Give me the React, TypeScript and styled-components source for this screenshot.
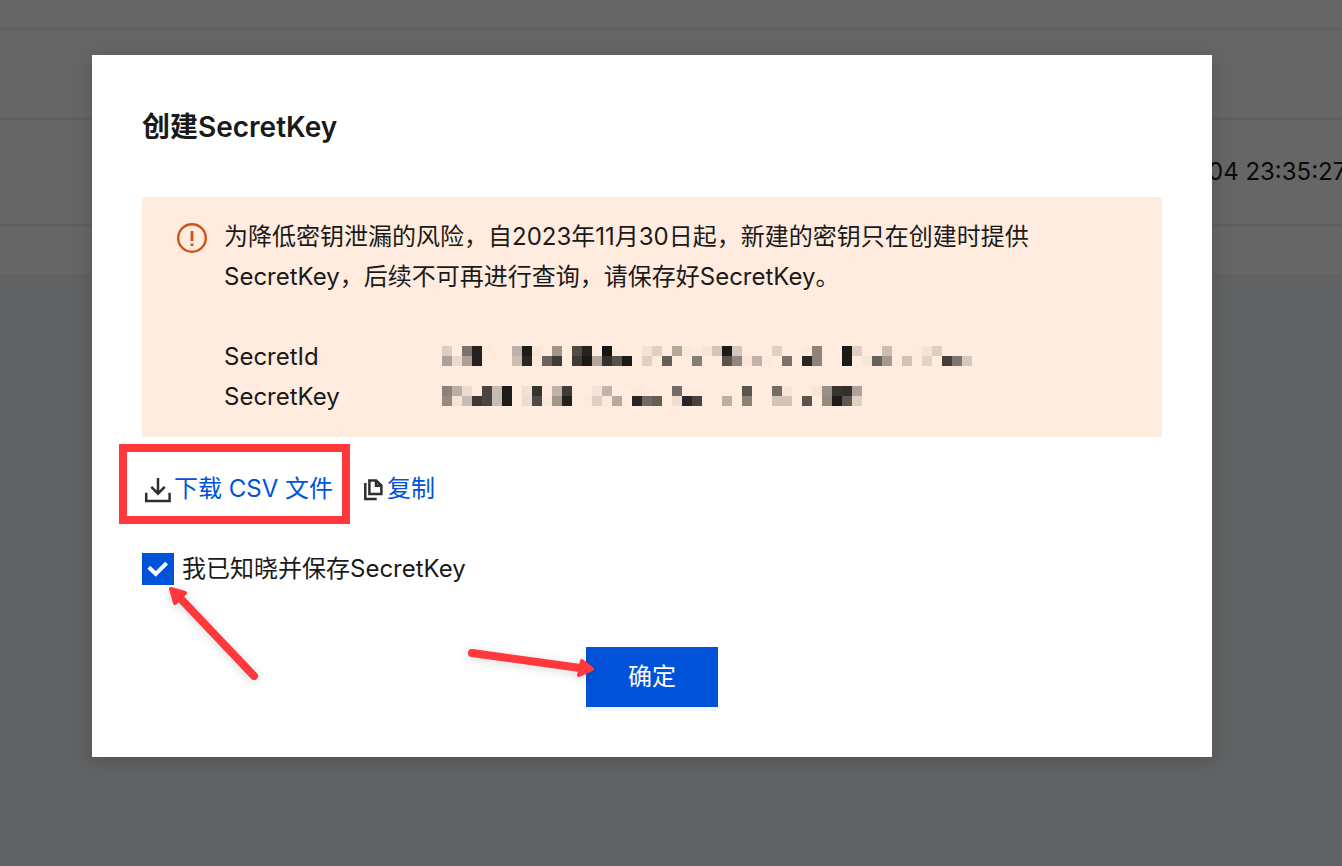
import React from 'react';
import styled, { createGlobalStyle } from 'styled-components';

const GlobalStyle = createGlobalStyle`
  * {
    box-sizing: border-box;
  }
  body {
    margin: 0;
    background: #f3f5f8;
    color: #1a1a1a;
    font-family: Inter, 'Noto Sans CJK SC', sans-serif;
    font-size: 24px;
    line-height: 40px;
  }
`;

const Page = styled.main`
  position: relative;
  min-height: 100vh;
  overflow: hidden;
`;

const KeyTable = styled.table`
  position: absolute;
  inset: 0 0 auto 0;
  width: 100%;
  table-layout: fixed;
  border-collapse: separate;
  border-spacing: 0;
  background: #ffffff;
`;

const KeyCell = styled.td<{ $height: number; $last?: boolean }>`
  height: ${(p) => p.$height}px;
  padding: 0;
  border-bottom: ${(p) => (p.$last ? '0' : '2px solid #ebebf7')};
  white-space: nowrap;
`;

const TimeColumn = styled.col`
  width: 134px;
`;

const Backdrop = styled.div`
  position: relative;
  min-height: 100vh;
  padding: 55px 130px 109px 92px;
  background: rgba(0, 0, 0, 0.6);
`;

const Dialog = styled.section`
  position: relative;
  padding: 50px;
  background: #ffffff;
  box-shadow: 0 4px 20px rgba(0, 0, 0, 0.16);
`;

const Title = styled.h1`
  margin: 0 0 48px;
  font-size: 28px;
  font-weight: 600;
  line-height: 44px;
`;

const Notice = styled.div`
  display: flex;
  gap: 17px;
  padding: 20px 35px;
  background: #ffecdf;
`;

const NoticeIcon = styled.svg`
  flex: none;
  width: 30px;
  height: 30px;
  margin-top: 6px;
`;

const NoticeBody = styled.div`
  flex: 1;
  min-width: 0;
`;

const NoticeText = styled.p`
  max-width: 820px;
  margin: 0 0 40px;
`;

const Credentials = styled.dl`
  display: grid;
  grid-template-columns: 218px 1fr;
  margin: 0;
`;

const CredentialValue = styled.dd`
  display: flex;
  align-items: center;
  margin: 0;
  padding-bottom: 2px;
`;

const Actions = styled.div`
  display: flex;
  gap: 30px;
  margin-top: 32px;
`;

const ActionLink = styled.a`
  position: relative;
  display: flex;
  align-items: center;
  color: #0052d9;
  text-decoration: none;
  white-space: nowrap;
`;

const ActionIcon = styled.svg<{ $size: number }>`
  flex: none;
  width: ${(p) => p.$size}px;
  height: ${(p) => p.$size}px;
  fill: none;
  stroke: #2e2e30;
`;

const HighlightFrame = styled.span`
  position: absolute;
  inset: -25px -17px -15px -23px;
  border: 8px solid #ff383c;
  pointer-events: none;
`;

const Confirm = styled.label`
  display: flex;
  align-items: center;
  gap: 8px;
  width: fit-content;
  margin-top: 40px;
`;

const CheckWrap = styled.span`
  position: relative;
  display: flex;
`;

const Checkbox = styled.input`
  appearance: none;
  width: 32px;
  height: 32px;
  margin: 0;
  border: 2px solid #0052d9;
  background: #ffffff;

  &:checked {
    background: #0052d9;
  }
`;

const CheckMark = styled.svg`
  position: absolute;
  inset: 0;
  pointer-events: none;
`;

const Footer = styled.footer`
  display: flex;
  justify-content: center;
  margin-top: 58px;
`;

const PrimaryButton = styled.button`
  width: 132px;
  height: 60px;
  padding: 0;
  border: 0;
  background: #0052d9;
  box-shadow: 0 4px 0 #f1f5fe;
  color: #ffffff;
  font: inherit;
`;

const ArrowLayer = styled.svg<{ $left: string; $bottom: number }>`
  position: absolute;
  left: ${(p) => p.$left};
  bottom: ${(p) => p.$bottom}px;
  overflow: visible;
  pointer-events: none;
  filter: drop-shadow(0 2px 5px rgba(0, 0, 0, 0.15));
`;

type Cells = Record<number, string>;

const secretIdCells: [Cells, Cells] = [
  {
    0: '#ddcec2', 2: '#7c736e', 3: '#262120', 4: '#feeadd', 7: '#bfb1a9', 8: '#1d1c1a', 9: '#f7e5d8',
    11: '#9f958d', 13: '#514d45', 14: '#262320', 16: '#161614', 20: '#f4e3d5', 21: '#dfd0c3',
    23: '#b3a89f', 24: '#fbe8da', 25: '#feeadd', 26: '#f7e5d7', 27: '#d3c5b8', 28: '#1b1b1a',
    29: '#d5c7bb', 33: '#dfd0c3', 36: '#fbe9dc', 37: '#8d837a', 40: '#1a1a16', 41: '#dfcfc3',
    44: '#cabdb2', 47: '#feebdd', 48: '#f5e4d6', 49: '#dfcfc3',
  },
  {
    0: '#aca198', 1: '#ecdacf', 2: '#ac9f97', 3: '#262120', 7: '#cabdb3', 8: '#2a2622', 9: '#fae8da',
    10: '#69635c', 11: '#3f3b37', 13: '#413b37', 14: '#1b1a16', 15: '#b2a69e', 16: '#34302c',
    17: '#57534c', 18: '#1a1a16', 20: '#dfd0c3', 21: '#fdeadc', 22: '#665f59', 25: '#867d75',
    28: '#59554d', 29: '#91877e', 30: '#f7e5d7', 31: '#c1b3aa', 32: '#feeadd', 34: '#7b726b',
    36: '#2a2622', 37: '#8d837a', 40: '#1a1a16', 42: '#f6e5d8', 43: '#65625a', 44: '#a5998f',
    46: '#d0c2b5', 48: '#e3d3c7', 50: '#433e3a', 51: '#7e756e', 52: '#d5c8bd',
  },
];

const secretKeyCells: [Cells, Cells] = [
  {
    0: '#8d827b', 1: '#baaea6', 2: '#ecdacf', 4: '#4a4541', 5: '#cabbb1', 6: '#1d1c18', 8: '#f3e1d5',
    9: '#37332f', 10: '#feebdd', 11: '#bfb3a7', 12: '#403b38', 15: '#f4e2d5', 16: '#c2b4ac',
    19: '#fbe9db', 23: '#736b65', 30: '#59554d', 33: '#736c65', 34: '#f7e5d8', 37: '#f7e5d7',
    38: '#9b9087', 39: '#37332f', 40: '#332f2c', 41: '#aea29a',
  },
  {
    0: '#968b83', 1: '#f5e3d6', 2: '#cabbb1', 3: '#3f3a38', 4: '#4a4541', 5: '#cabbb1', 6: '#1d1c18',
    8: '#ecdbd0', 9: '#504b48', 10: '#fae8da', 11: '#a1968e', 12: '#22211e', 14: '#fdeadf',
    15: '#dfcfc3', 16: '#fce9dc', 17: '#b5a9a0', 19: '#2a2522', 20: '#716a64', 21: '#645d58',
    23: '#efddd0', 24: '#2a2522', 25: '#48433f', 28: '#bbafa6', 30: '#8a8178', 33: '#d2c5b8',
    34: '#d2c5b8', 36: '#59554d', 38: '#968b83', 39: '#1f1b1a', 40: '#5d5952', 41: '#dfcfc3',
  },
];

// A redacted value, drawn as two rows of 10px blocks.
function Mosaic({ rows, columns }: { rows: [Cells, Cells]; columns: number }) {
  return (
    <svg width={columns * 10} height="20" shapeRendering="crispEdges" aria-hidden="true">
      {rows.map((row, y) =>
        Object.entries(row).map(([x, color]) => (
          <rect key={`${x}-${y}`} x={Number(x) * 10} y={y * 10} width="10" height="10" fill={color} />
        )),
      )}
    </svg>
  );
}

function Arrow({ shaft, head }: { shaft: string; head: string }) {
  return (
    <g stroke="#ff383c" strokeLinecap="round" strokeLinejoin="round">
      <path d={shaft} strokeWidth="8" fill="none" />
      <path d={head} strokeWidth="4" fill="#ff383c" />
    </g>
  );
}

const keyRows = [
  { height: 30, time: '' },
  { height: 90, time: '' },
  { height: 106, time: '04 23:35:27' },
  { height: 48, time: '' },
];

export default function App() {
  return (
    <>
      <GlobalStyle />
      <Page>
        <KeyTable>
          <colgroup>
            <col />
            <TimeColumn />
          </colgroup>
          <tbody>
            {keyRows.map((row, i) => (
              <tr key={i}>
                <KeyCell $height={row.height} $last={i === keyRows.length - 1} />
                <KeyCell $height={row.height} $last={i === keyRows.length - 1}>
                  {row.time}
                </KeyCell>
              </tr>
            ))}
          </tbody>
        </KeyTable>
        <Backdrop>
          <Dialog role="dialog" aria-labelledby="dialog-title">
            <Title id="dialog-title">创建SecretKey</Title>
            <Notice>
              <NoticeIcon viewBox="0 0 30 30" aria-hidden="true">
                <circle cx="15" cy="15" r="13.8" fill="none" stroke="#cc5216" strokeWidth="2.4" />
                <path d="M15 8v10M15 20.5v2.4" stroke="#cc5216" strokeWidth="2.8" />
              </NoticeIcon>
              <NoticeBody>
                <NoticeText>
                  为降低密钥泄漏的风险，自2023年11月30日起，新建的密钥只在创建时提供
                  <br />
                  SecretKey，后续不可再进行查询，请保存好SecretKey。
                </NoticeText>
                <Credentials>
                  <dt>SecretId</dt>
                  <CredentialValue>
                    <Mosaic rows={secretIdCells} columns={53} />
                  </CredentialValue>
                  <dt>SecretKey</dt>
                  <CredentialValue>
                    <Mosaic rows={secretKeyCells} columns={42} />
                  </CredentialValue>
                </Credentials>
              </NoticeBody>
            </Notice>
            <Actions>
              <ActionLink href="#download">
                <ActionIcon $size={32} viewBox="0 0 32 32" aria-hidden="true">
                  <path d="M4.2 19.8V28H27.6V19.8M16 5V21M9.3 13.8L16 20.6L22.7 13.8" strokeWidth="2.5" />
                </ActionIcon>
                下载 CSV 文件
                <HighlightFrame />
              </ActionLink>
              <ActionLink href="#copy">
                <ActionIcon $size={24} viewBox="0 0 24 24" aria-hidden="true">
                  <path d="M2.3 6V22H13.7M6.4 3.4H13.2L18.4 8.6V16.9H6.4ZM13 3.4V8.8H18.4" strokeWidth="2.5" />
                </ActionIcon>
                复制
              </ActionLink>
            </Actions>
            <Confirm>
              <CheckWrap>
                <Checkbox type="checkbox" defaultChecked />
                <CheckMark viewBox="0 0 32 32" aria-hidden="true">
                  <path d="M6.8 14.2L13.8 21L24.6 10.2" fill="none" stroke="#ffffff" strokeWidth="4" />
                </CheckMark>
              </CheckWrap>
              我已知晓并保存SecretKey
            </Confirm>
            <Footer>
              <PrimaryButton type="button">确定</PrimaryButton>
            </Footer>
            <ArrowLayer $left="76px" $bottom={76} width="92" height="96" aria-hidden="true">
              <Arrow shaft="M86 91L12 13" head="M3 4L17 8L7 18Z" />
            </ArrowLayer>
            <ArrowLayer $left="calc(50% - 186px)" $bottom={77} width="130" height="32" aria-hidden="true">
              <Arrow shaft="M6 5L114 20" head="M126 21L116 13L113 27Z" />
            </ArrowLayer>
          </Dialog>
        </Backdrop>
      </Page>
    </>
  );
}
